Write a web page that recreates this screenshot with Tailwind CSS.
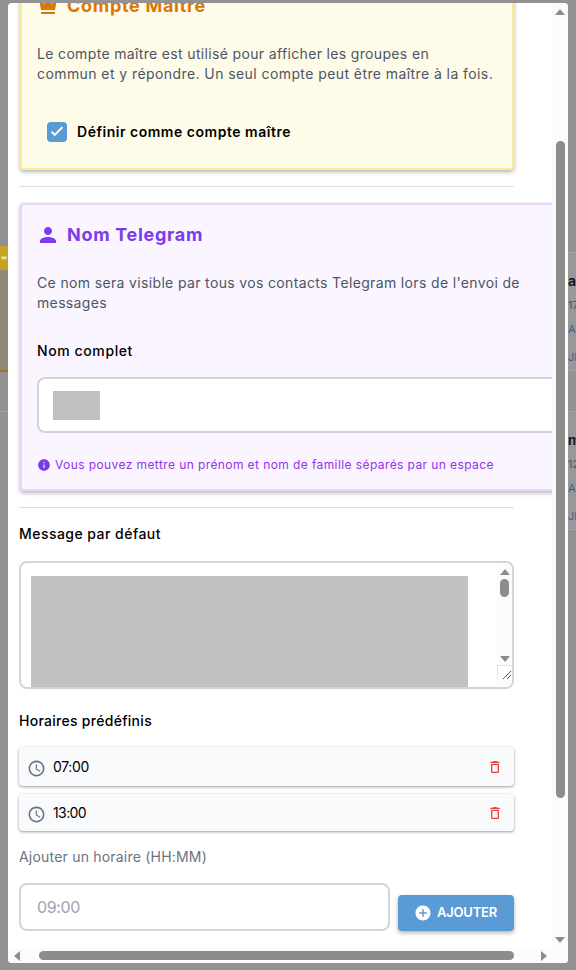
<!DOCTYPE html>
<html>

<head>
    <title>Compte Telegram</title>
    <meta charset="utf-8">
    <meta name="viewport" content="width=device-width, initial-scale=1">
    <script src="https://cdn.jsdelivr.net/npm/@tailwindcss/browser@4"></script>
</head>

<body class="font-['Inter','Liberation_Sans',sans-serif]">
    <div class="relative flex h-[970px] w-[576px] justify-between overflow-hidden bg-[#929293]">
        <!-- page behind the dialog, only the edges show -->
        <div class="flex w-2 flex-col">
            <div class="mt-[246px] flex h-6 items-center justify-center bg-[#c5a41f]">
                <svg class="h-2 w-2 fill-[#e8e2c0]" viewBox="0 0 24 24">
                    <path d="M5 16L3 5l5.5 5L12 4l3.5 6L21 5l-2 11H5z"></path>
                </svg>
            </div>
            <div class="h-[100px] bg-[#8e8b7a]"></div>
            <div class="h-0.5 bg-[#a3781c]"></div>
            <div class="h-10 border-b border-[#a2a2a3]"></div>
        </div>
        <div class="flex w-2 flex-col overflow-hidden whitespace-nowrap text-[11px]">
            <div class="mt-[252px] h-[119px] border-y border-[#a2a2a3] bg-[#98989a] pt-5">
                <p class="text-sm font-semibold leading-4 text-[#111]">a</p>
                <p class="mt-2 leading-4 text-[#555]">17</p>
                <p class="mt-2 leading-4 text-[#3f5f86]">AF</p>
                <p class="mt-3 leading-4 text-[#3f5f86]">JF</p>
            </div>
            <div class="mt-10 h-[119px] border-y border-[#a2a2a3] bg-[#98989a] pt-5">
                <p class="text-sm font-semibold leading-4 text-[#111]">m</p>
                <p class="mt-2 leading-4 text-[#555]">12</p>
                <p class="mt-2 leading-4 text-[#3f5f86]">AF</p>
                <p class="mt-3 leading-4 text-[#3f5f86]">JF</p>
            </div>
        </div>

        <!-- dialog -->
        <div class="absolute left-2 top-[3px] h-[960px] w-[560px] overflow-hidden rounded bg-white">
            <div class="h-[945px] w-[544px] overflow-hidden pl-[11px]">
                <div class="-mt-[29px] w-[495px]">

                    <div class="ml-px rounded border-2 border-[#fdeb8f] bg-[#fffbe9] pb-[26px] pl-[15px] pr-4 pt-4 shadow-[0_2px_4px_rgba(0,0,0,0.3)]">
                        <div class="flex h-7 items-center gap-[7px] text-lg font-bold tracking-[0.039em] text-[#d97706]">
                            <svg class="-ml-px h-6 w-6 fill-current" viewBox="0 0 24 24">
                                <path d="M5 16L3 5l5.5 5L12 4l3.5 6L21 5l-2 11H5zm14 3c0 .6-.4 1-1 1H6c-.6 0-1-.4-1-1v-1h14v1z"></path>
                            </svg>
                            Compte Maître
                        </div>
                        <p class="mt-6 whitespace-nowrap text-sm leading-5 text-[#4b5563]">
                            <span class="block tracking-[0.0245em]">Le compte maître est utilisé pour afficher les groupes en</span>
                            <span class="block tracking-[0.03em]">commun et y répondre. Un seul compte peut être maître à la fois.</span>
                        </p>
                        <div class="ml-2.5 mt-[38px] flex items-center gap-2.5">
                            <div class="flex h-5 w-5 items-center justify-center rounded-sm bg-[#5b9bd5]">
                                <svg class="h-[18px] w-[18px] fill-white" viewBox="0 0 24 24">
                                    <path d="M9 17.6 3.8 12.4l1.8-1.8L9 14l9.4-9.4 1.8 1.8z"></path>
                                </svg>
                            </div>
                            <span class="text-sm font-semibold leading-5 tracking-[0.037em] text-black">Définir comme compte maître</span>
                        </div>
                    </div>

                    <div class="mt-4 h-px bg-[#e0e0e0]"></div>

                    <div class="ml-px mt-4 w-[560px] rounded border-2 border-[#e9d5ff] bg-[#faf5ff] pb-4 pl-[15px] pr-0 pt-4 shadow-[0_2px_4px_rgba(0,0,0,0.3)]">
                        <div class="flex h-7 items-center gap-[7px] text-lg font-bold tracking-[0.039em] text-[#7c3aed]">
                            <svg class="-ml-px h-6 w-6 fill-current" viewBox="0 0 24 24">
                                <path d="M12 12c2.21 0 4-1.79 4-4s-1.79-4-4-4-4 1.79-4 4 1.79 4 4 4zm0 2c-2.67 0-8 1.34-8 4v2h16v-2c0-2.66-5.33-4-8-4z"></path>
                            </svg>
                            Nom Telegram
                        </div>
                        <p class="mt-6 w-[495px] text-sm leading-5 tracking-[0.025em] text-[#4b5563]">Ce nom sera visible par tous vos contacts Telegram lors de l'envoi de messages</p>
                        <p class="mt-7 text-sm font-medium leading-5 tracking-[0.043em] text-black">Nom complet</p>
                        <div class="mt-4 flex h-14 w-[530px] items-center rounded-lg border-2 border-[#d1d5db] bg-white pl-3.5">
                            <div class="h-[29px] w-[47px] bg-[#c0c0c0]"></div>
                        </div>
                        <div class="mt-6 flex h-4 items-center gap-1 text-xs tracking-[0.034em] text-[#9333ea]">
                            <svg class="h-[14px] w-[14px] fill-[#7c3aed]" viewBox="0 0 24 24">
                                <path d="M12 2C6.48 2 2 6.48 2 12s4.48 10 10 10 10-4.48 10-10S17.52 2 12 2zm1 15h-2v-6h2v6zm0-8h-2V7h2v2z"></path>
                            </svg>
                            Vous pouvez mettre un prénom et nom de famille séparés par un espace
                        </div>
                    </div>

                    <div class="mt-4 h-px bg-[#e0e0e0]"></div>

                    <p class="mt-4 text-sm font-medium leading-5 tracking-[0.033em] text-black">Message par défaut</p>
                    <div class="relative mt-[17px] h-[128px] overflow-hidden rounded-lg border-2 border-[#d1d5db] bg-white pl-2.5 pt-[13px]">
                        <div class="h-[111px] w-[437px] bg-[#c2c2c2]"></div>
                        <div class="absolute inset-y-0 right-0 flex w-[15px] flex-col items-center bg-[#fbfbfb]">
                            <div class="mt-1.5 h-0 w-0 border-x-[5px] border-b-[6px] border-x-transparent border-b-[#8c8c8c]"></div>
                            <div class="mt-1 h-[18px] w-[9px] rounded-full bg-[#8c8c8c]"></div>
                            <div class="mt-[59px] h-0 w-0 border-x-[5px] border-t-[6px] border-x-transparent border-t-[#8c8c8c]"></div>
                            <div class="mt-[3px] flex h-[15px] w-[15px] items-end justify-end border-l border-t border-[#e2e2e2] bg-white">
                                <svg class="h-3 w-3 stroke-[#555]" viewBox="0 0 12 12" fill="none" stroke-width="1">
                                    <path d="M3 11 11 3M7 11l4-4"></path>
                                </svg>
                            </div>
                        </div>
                    </div>

                    <p class="mt-[22px] text-sm font-medium leading-5 tracking-[0.02em] text-black">Horaires prédéfinis</p>
                    <div class="mt-4 flex h-[39px] items-center justify-between rounded bg-[#f9fafb] px-2 shadow-[0_1px_3px_rgba(0,0,0,0.4)]">
                        <div class="flex items-center gap-[7px] text-sm tracking-[-0.024em] text-black">
                            <svg class="-mb-0.5 mt-0.5 h-[19px] w-[19px] fill-[#64748b]" viewBox="0 0 24 24">
                                <path d="M11.99 2C6.47 2 2 6.48 2 12s4.47 10 9.99 10C17.52 22 22 17.52 22 12S17.52 2 11.99 2zM12 20c-4.42 0-8-3.58-8-8s3.58-8 8-8 8 3.58 8 8-3.58 8-8 8zm.5-13H11v6l5.25 3.15.75-1.23-4.5-2.67z"></path>
                            </svg>
                            07:00
                        </div>
                        <svg class="mr-[3px] h-4 w-4 fill-[#ef4444]" viewBox="0 0 24 24">
                            <path d="M6 19c0 1.1.9 2 2 2h8c1.1 0 2-.9 2-2V7H6v12zM8 9h8v10H8V9zm7.5-5l-1-1h-5l-1 1H5v2h14V4z"></path>
                        </svg>
                    </div>
                    <div class="mt-2 flex h-[37px] items-center justify-between rounded bg-[#f9fafb] px-2 shadow-[0_1px_3px_rgba(0,0,0,0.4)]">
                        <div class="flex items-center gap-[7px] text-sm tracking-[-0.043em] text-black">
                            <svg class="-mb-0.5 mt-0.5 h-[19px] w-[19px] fill-[#64748b]" viewBox="0 0 24 24">
                                <path d="M11.99 2C6.47 2 2 6.48 2 12s4.47 10 9.99 10C17.52 22 22 17.52 22 12S17.52 2 11.99 2zM12 20c-4.42 0-8-3.58-8-8s3.58-8 8-8 8 3.58 8 8-3.58 8-8 8zm.5-13H11v6l5.25 3.15.75-1.23-4.5-2.67z"></path>
                            </svg>
                            13:00
                        </div>
                        <svg class="mr-[3px] h-4 w-4 fill-[#ef4444]" viewBox="0 0 24 24">
                            <path d="M6 19c0 1.1.9 2 2 2h8c1.1 0 2-.9 2-2V7H6v12zM8 9h8v10H8V9zm7.5-5l-1-1h-5l-1 1H5v2h14V4z"></path>
                        </svg>
                    </div>

                    <p class="mt-4 text-sm leading-5 tracking-[0.0145em] text-[#6b7280]">Ajouter un horaire (HH:MM)</p>
                    <div class="mt-4 flex items-end gap-2">
                        <div class="flex h-12 w-[371px] items-center rounded-lg border-2 border-[#d1d5db] bg-white pl-4 text-base tracking-[-0.023em] text-[#9ca3af]">09:00</div>
                        <div class="flex h-9 w-[116px] items-center gap-[5px] rounded bg-[#5b9bd5] pl-4 text-[13px] font-semibold tracking-[-0.016em] text-white shadow-[0_2px_4px_rgba(0,0,0,0.3)]">
                            <svg class="h-[18px] w-[18px] fill-white" viewBox="0 0 24 24">
                                <path d="M12 2C6.48 2 2 6.48 2 12s4.48 10 10 10 10-4.48 10-10S17.52 2 12 2zm5 11h-4v4h-2v-4H7v-2h4V7h2v4h4v2z"></path>
                            </svg>
                            AJOUTER
                        </div>
                    </div>
                </div>
            </div>

            <!-- dialog scrollbars -->
            <div class="absolute inset-y-0 right-0 flex w-4 flex-col items-center bg-[#fbfbfb]">
                <div class="mt-1.5 h-0 w-0 border-x-[5px] border-b-[6px] border-x-transparent border-b-[#8c8c8c]"></div>
                <div class="mt-[126px] h-[657px] w-[9px] rounded-full bg-[#8c8c8c]"></div>
                <div class="mt-[139px] h-0 w-0 border-x-[5px] border-t-[6px] border-x-transparent border-t-[#8c8c8c]"></div>
            </div>
            <div class="absolute inset-x-0 bottom-0 flex h-[15px] items-center bg-[#fbfbfb] pl-1.5">
                <div class="h-0 w-0 border-y-[5px] border-r-[6px] border-y-transparent border-r-[#8c8c8c]"></div>
                <div class="ml-[19px] h-[9px] w-[475px] rounded-full bg-[#8c8c8c]"></div>
                <div class="ml-[27px] h-0 w-0 border-y-[5px] border-l-[6px] border-y-transparent border-l-[#8c8c8c]"></div>
            </div>
        </div>
    </div>
</body>

</html>
